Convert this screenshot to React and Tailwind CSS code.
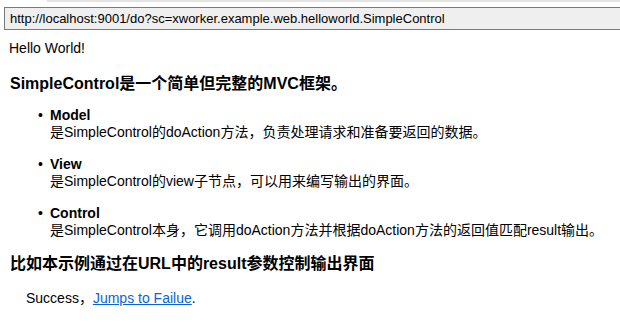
export default function App() {
  const items = [
    { name: 'Model', desc: '是SimpleControl的doAction方法，负责处理请求和准备要返回的数据。' },
    { name: 'View', desc: '是SimpleControl的view子节点，可以用来编写输出的界面。' },
    { name: 'Control', desc: '是SimpleControl本身，它调用doAction方法并根据doAction方法的返回值匹配result输出。' },
  ];

  return (
    <div
      className="w-[620px] h-[336px] overflow-hidden bg-white text-black"
      style={{ fontFamily: '"Liberation Sans", Arial, "Noto Sans CJK SC", sans-serif' }}
    >
      {/* browser address bar */}
      <div className="h-[2px] ml-[47px] bg-[#e3e3e3]" />
      <div className="mt-[5px] ml-[4px] h-[23px] border-y border-l border-[#7a7a7a] bg-[#efefef] flex items-center pl-[5px] text-[13px]">
        http://localhost:9001/do?sc=xworker.example.web.helloworld.SimpleControl
      </div>

      <div className="px-[9px]">
        <p className="mt-[9px] text-[14px] leading-[18px]">Hello World!</p>

        <h3 className="mt-[17px] text-[16px] leading-[20px] font-bold pl-[1px]">
          SimpleControl是一个简单但完整的MVC框架。
        </h3>

        <ul className="mt-[13px] pl-[29px]">
          {items.map((it) => (
            <li key={it.name} className="flex text-[14px] leading-[17px] mb-[15px]">
              <span className="w-[12px] shrink-0">•</span>
              <div>
                <div className="font-bold">{it.name}</div>
                <div>{it.desc}</div>
              </div>
            </li>
          ))}
        </ul>

        <h3 className="mt-[5px] text-[16px] leading-[20px] font-bold pl-[1px]">
          比如本示例通过在URL中的result参数控制输出界面
        </h3>

        <p className="mt-[15px] pl-[17px] text-[14px] leading-[18px]">
          Success，<a href="#" className="text-[#0b63d6] underline">Jumps to Failue</a>.
        </p>
      </div>
    </div>
  );
}
